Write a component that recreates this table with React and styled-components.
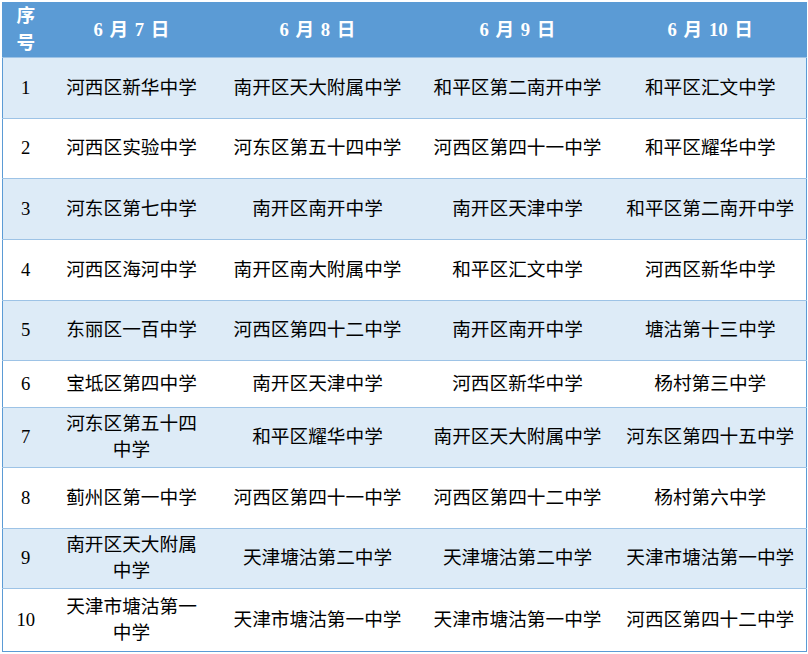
import styled, { createGlobalStyle } from "styled-components";

const GlobalStyle = createGlobalStyle`
  html, body {
    margin: 0;
    padding: 0;
    background: #ffffff;
  }
  body {
    font-family: "Liberation Serif", "Noto Sans CJK SC", serif;
  }
`;

const Page = styled.div`
  padding: 2px;
  width: 808px;
  box-sizing: border-box;
`;

const Table = styled.table`
  width: 804px;
  border-collapse: collapse;
  table-layout: fixed;
  border: 1px solid #5b9bd5;
  border-top: none;
  font-size: 18.67px;
  line-height: 26px;
  color: #000000;
`;

const Col = styled.col`
  width: ${(p) => p.$w}px;
`;

const HeadRow = styled.tr`
  height: 55px;
  background: #5b9bd5;
`;

const HeadCell = styled.th`
  padding: 0 10px;
  color: #ffffff;
  font-weight: bold;
  text-align: center;
  vertical-align: middle;
  line-height: 27px;
  word-spacing: 2px;
`;

const Row = styled.tr`
  height: ${(p) => p.$h}px;
  background: ${(p) => (p.$striped ? "#ddebf7" : "#ffffff")};
  border-top: 1px solid #9dc3e6;
`;

const Cell = styled.td`
  padding: 0 10px;
  text-align: center;
  vertical-align: middle;
  font-weight: normal;
`;

const NumCell = styled(Cell)`
  padding: 0 4px;
`;

const columns = [46, 166, 206, 194, 192];

const heads = ["6 月 7 日", "6 月 8 日", "6 月 9 日", "6 月 10 日"];

const rows = [
  ["河西区新华中学", "南开区天大附属中学", "和平区第二南开中学", "和平区汇文中学"],
  ["河西区实验中学", "河东区第五十四中学", "河西区第四十一中学", "和平区耀华中学"],
  ["河东区第七中学", "南开区南开中学", "南开区天津中学", "和平区第二南开中学"],
  ["河西区海河中学", "南开区南大附属中学", "和平区汇文中学", "河西区新华中学"],
  ["东丽区一百中学", "河西区第四十二中学", "南开区南开中学", "塘沽第十三中学"],
  ["宝坻区第四中学", "南开区天津中学", "河西区新华中学", "杨村第三中学"],
  ["河东区第五十四中学", "和平区耀华中学", "南开区天大附属中学", "河东区第四十五中学"],
  ["蓟州区第一中学", "河西区第四十一中学", "河西区第四十二中学", "杨村第六中学"],
  ["南开区天大附属中学", "天津塘沽第二中学", "天津塘沽第二中学", "天津市塘沽第一中学"],
  ["天津市塘沽第一中学", "天津市塘沽第一中学", "天津市塘沽第一中学", "河西区第四十二中学"],
];

const heights = [61, 60, 61, 61, 60, 47, 60, 61, 60, 63];

export default function App() {
  return (
    <Page>
      <GlobalStyle />
      <Table>
        <colgroup>
          {columns.map((w, i) => (
            <Col key={i} $w={w} />
          ))}
        </colgroup>
        <thead>
          <HeadRow>
            <HeadCell>序号</HeadCell>
            {heads.map((h) => (
              <HeadCell key={h}>{h}</HeadCell>
            ))}
          </HeadRow>
        </thead>
        <tbody>
          {rows.map((r, i) => (
            <Row key={i} $h={heights[i]} $striped={i % 2 === 0}>
              <NumCell>{i + 1}</NumCell>
              {r.map((s, j) => (
                <Cell key={j}>{s}</Cell>
              ))}
            </Row>
          ))}
        </tbody>
      </Table>
    </Page>
  );
}
